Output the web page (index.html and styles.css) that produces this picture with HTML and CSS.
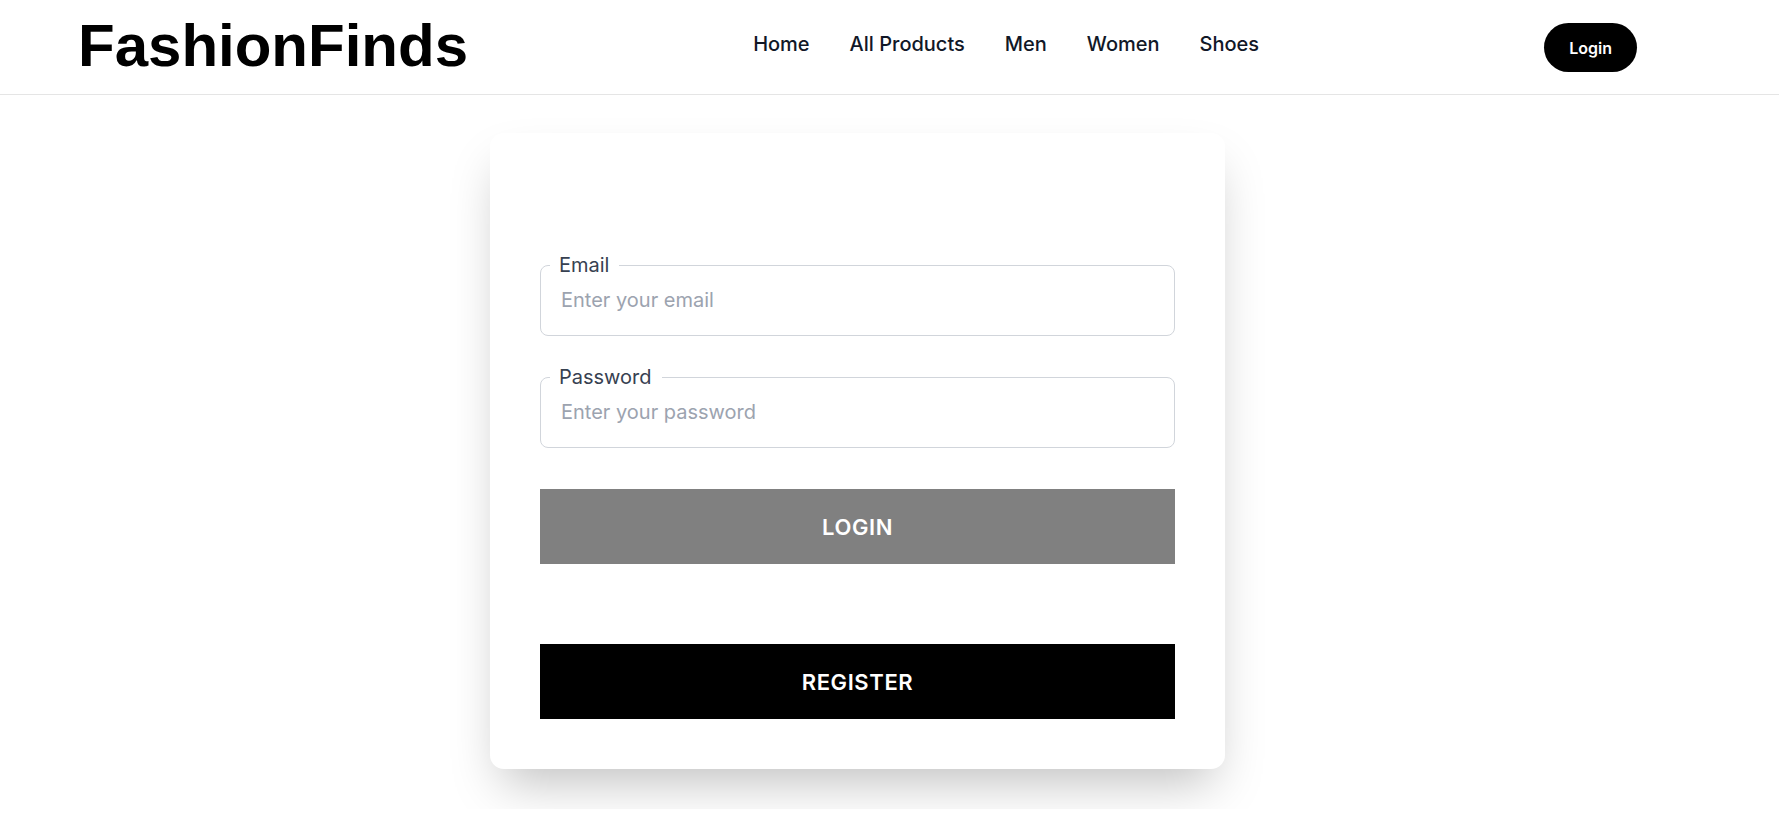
FILE: index.html
```html
<!DOCTYPE html>
<html lang="en">
<head>
<meta charset="utf-8">
<title>FashionFinds - Login</title>
<link rel="stylesheet" href="styles.css">
</head>
<body>
<header class="site-header">
  <a class="logo" href="#">FashionFinds</a>
  <nav class="main-nav">
    <a href="#">Home</a>
    <a href="#">All Products</a>
    <a href="#">Men</a>
    <a href="#">Women</a>
    <a href="#">Shoes</a>
  </nav>
  <button class="pill-btn" type="button">Login</button>
</header>
<main class="page">
  <form class="card">
    <fieldset class="field">
      <legend>Email</legend>
      <input type="email" placeholder="Enter your email">
    </fieldset>
    <fieldset class="field field-password">
      <legend>Password</legend>
      <input type="password" placeholder="Enter your password">
    </fieldset>
    <button class="block-btn btn-login" type="button">LOGIN</button>
    <button class="block-btn btn-register" type="button">REGISTER</button>
  </form>
</main>
</body>
</html>
```

FILE: styles.css
```css
* { box-sizing: border-box; }

html, body {
  margin: 0;
  padding: 0;
  background: #ffffff;
}

body {
  font-family: Inter, "Noto Sans", sans-serif;
  color: #111827;
}

.site-header {
  height: 95px;
  display: flex;
  align-items: center;
  justify-content: space-between;
  padding: 0 142px 0 78px;
  border-bottom: 1px solid #e5e5e5;
}

.logo {
  font-family: "Liberation Sans", Arial, sans-serif;
  font-weight: 700;
  font-size: 60px;
  line-height: 69px;
  color: #000;
  text-decoration: none;
  margin-bottom: 4px;
}

.main-nav {
  display: flex;
  gap: 40px;
  margin-bottom: 7px;
}

.main-nav a {
  font-size: 20px;
  line-height: 28px;
  font-weight: 500;
  color: #111827;
  text-decoration: none;
}

.pill-btn {
  height: 49px;
  padding: 0 25px;
  border: none;
  border-radius: 999px;
  background: #000;
  color: #fff;
  font-family: Inter, sans-serif;
  font-size: 16px;
  font-weight: 600;
  margin-top: 1px;
}

.page {
  display: flex;
  justify-content: center;
  padding: 38px 64px 40px 0;
}

.card {
  width: 735px;
  background: #fff;
  border-radius: 14px;
  box-shadow: 0 25px 50px -12px rgba(0, 0, 0, 0.25);
  padding: 120px 50px 50px;
  display: flex;
  flex-direction: column;
}

.field {
  margin: 0;
  padding: 0 20px;
  border: 1px solid #d1d5db;
  border-radius: 8px;
  min-width: 0;
}

.field legend {
  margin-left: -11px;
  padding: 0 10px 0 9px;
  font-size: 20px;
  line-height: 24px;
  color: #374151;
}

.field input {
  display: block;
  width: 100%;
  border: none;
  outline: none;
  background: transparent;
  font-family: Inter, sans-serif;
  font-size: 20px;
  line-height: 24px;
  height: 58px;
  padding: 0 0 12px;
  color: #111827;
}

.field input::placeholder {
  color: #9ca3af;
}

.field-password {
  margin-top: 29px;
}

.block-btn {
  height: 75px;
  border: none;
  border-radius: 0;
  color: #fff;
  font-family: Inter, sans-serif;
  font-size: 22px;
  font-weight: 600;
  letter-spacing: 0.6px;
}

.btn-login {
  margin-top: 41px;
  background: #808080;
}

.btn-register {
  margin-top: 80px;
  background: #000;
}
```
